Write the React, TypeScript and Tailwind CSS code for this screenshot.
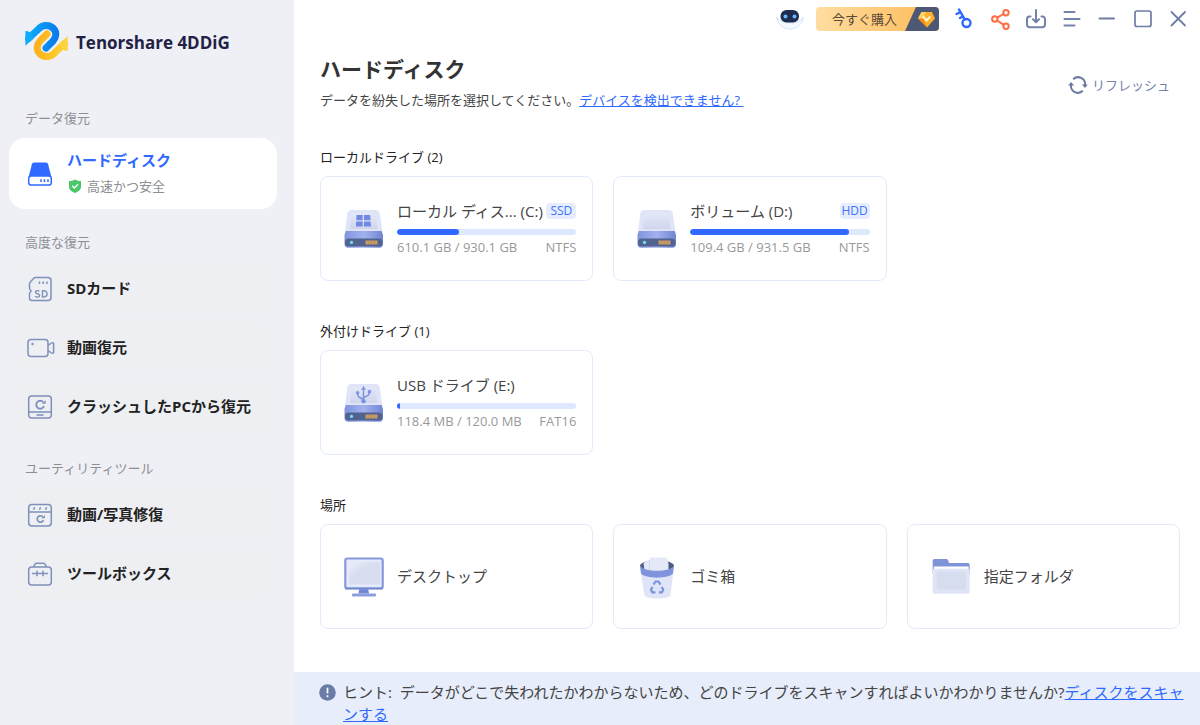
import React from "react";

type Drive = {
  name: string;
  letter: string;
  usage: string;
  format: string;
  percent: number;
  type?: string;
  mark?: "windows" | "usb";
};

const localDrives: Drive[] = [
  {
    name: "ローカル ディス...",
    letter: "(C:)",
    usage: "610.1 GB / 930.1 GB",
    format: "NTFS",
    percent: 34.4,
    type: "SSD",
    mark: "windows",
  },
  {
    name: "ボリューム",
    letter: "(D:)",
    usage: "109.4 GB / 931.5 GB",
    format: "NTFS",
    percent: 88.3,
    type: "HDD",
  },
];

const externalDrives: Drive[] = [
  {
    name: "USB ドライブ",
    letter: "(E:)",
    usage: "118.4 MB / 120.0 MB",
    format: "FAT16",
    percent: 1.5,
    mark: "usb",
  },
];

const Logo = () => (
  <svg width="43" height="40" viewBox="0 0 43 40" fill="none" aria-hidden="true">
    <defs>
      <linearGradient id="logoBlue" x1="0" y1="12" x2="34" y2="16" gradientUnits="userSpaceOnUse">
        <stop stopColor="#0cb0fb" />
        <stop offset="1" stopColor="#0b78ea" />
      </linearGradient>
      <linearGradient id="logoYellow" x1="9" y1="20" x2="43" y2="26" gradientUnits="userSpaceOnUse">
        <stop stopColor="#fdae1b" />
        <stop offset="1" stopColor="#fed535" />
      </linearGradient>
    </defs>
    <path d="M39.5 22.5 29 32.5C25 36.5 19 36.5 15 33C11 29 11.5 24 15 20L22 13" stroke="url(#logoYellow)" strokeWidth="7" strokeLinecap="round" />
    <path d="M42.6 15.2V29.8C41 30.4 39 29.2 37 28L34 23Z" fill="#fed23a" />
    <path d="M3.5 17.5 14 7.5C18 3.5 24 3.5 28 7C32 11 31.5 16 28 20L21 27" stroke="url(#logoBlue)" strokeWidth="7" strokeLinecap="round" />
    <path d="M.4 24.8V10.2C2 9.6 4 10.8 6 12L9 17Z" fill="#0cacfa" />
  </svg>
);

const DiskNavIcon = () => (
  <svg width="26" height="26" viewBox="0 0 26 26" fill="none" aria-hidden="true">
    <path d="M7.2 1.5H18.8C20 1.5 20.8 2.2 21.1 3.3L24.3 15.5H1.7L4.9 3.3C5.2 2.2 6 1.5 7.2 1.5Z" fill="#3069ff" />
    <rect x="1.7" y="15" width="22.6" height="9" rx="2.6" fill="#fff" stroke="#3069ff" strokeWidth="1.5" />
    <path d="M14 18.2V21M17.5 18.2V21M21 18.2V21" stroke="#3069ff" strokeWidth="1.5" />
  </svg>
);

const SdIcon = () => (
  <svg width="26" height="26" viewBox="0 0 26 26" fill="none" stroke="#7f91bb" strokeWidth="1.5" aria-hidden="true">
    <path d="M8.5 1.5H21A3 3 0 0 1 24 4.5V21.5A3 3 0 0 1 21 24.5H5A2.5 2.5 0 0 1 2.5 22V17.5C2.5 16.5 4 16 4 15C4 14 2.5 13.5 2.5 12.5V8C2.5 7.2 2.8 6.6 3.4 6L6.5 2.5C7 1.9 7.6 1.5 8.5 1.5Z" />
    <path d="M12.5 5.5V8M16.2 5.5V8M19.9 5.5V8" />
    <path d="M12.4 15.4C11 14.2 8.4 14.5 8.4 16.2C8.4 18.3 12.7 17.2 12.7 19.5C12.7 21.4 9.6 21.6 8 20.3M15.5 14.7V21H16.8C21.2 21 21.2 14.7 16.8 14.7Z" strokeWidth="1.4" />
  </svg>
);

const VideoIcon = () => (
  <svg width="28" height="20" viewBox="0 0 28 20" fill="none" stroke="#7f91bb" strokeWidth="1.5" aria-hidden="true">
    <rect x="1" y="1.5" width="20" height="17" rx="3" />
    <circle cx="5.5" cy="6" r="1.2" fill="#7f91bb" stroke="none" />
    <path d="M21 7.5 24.5 5C25.5 4.3 26.6 4.8 26.6 6V14C26.6 15.2 25.5 15.7 24.5 15L21 12.5" />
  </svg>
);

const CrashIcon = () => (
  <svg width="26" height="26" viewBox="0 0 26 26" fill="none" stroke="#7f91bb" strokeWidth="1.5" aria-hidden="true">
    <rect x="1.7" y="2" width="22.6" height="22" rx="3" />
    <path d="M1.7 18H24.3M9.5 21H16.5" />
    <path d="M16.2 8A4 4 0 1 0 17 12.2" strokeWidth="1.8" />
    <path d="M14.6 9.8H18.7V6.2Z" fill="#7f91bb" stroke="none" />
  </svg>
);

const RepairIcon = () => (
  <svg width="26" height="26" viewBox="0 0 26 26" fill="none" stroke="#7f91bb" strokeWidth="1.5" aria-hidden="true">
    <rect x="1.7" y="2.5" width="22.6" height="21.5" rx="3.2" />
    <path d="M1.7 10H24.3M6.6 7.8 7.6 5.3M12.5 7.8 13.5 5.3M18.6 7.8 19.6 5.3" />
    <path d="M15.6 14.6A3.2 3.2 0 1 0 16.4 18.2" strokeWidth="1.7" />
    <path d="M14.3 16.2H17.9V12.9Z" fill="#7f91bb" stroke="none" />
  </svg>
);

const ToolboxIcon = () => (
  <svg width="26" height="26" viewBox="0 0 26 26" fill="none" stroke="#7f91bb" strokeWidth="1.5" aria-hidden="true">
    <rect x="1.7" y="6" width="22.6" height="18" rx="3" />
    <path d="M6.5 6 7.8 3.3C8.2 2.5 8.7 2.2 9.5 2.2H16.5C17.3 2.2 17.8 2.5 18.2 3.3L19.5 6M5 12.5H21M10 9.8V15.2M16 9.8V15.2" />
  </svg>
);

const DriveIcon = ({ mark }: { mark?: "windows" | "usb" }) => (
  <svg width="40" height="40" viewBox="0 0 40 40" fill="none" aria-hidden="true">
    <defs>
      <linearGradient id="driveTop" x1="0" y1="0" x2="0" y2="1">
        <stop stopColor="#e4e8f8" />
        <stop offset="1" stopColor="#cfd6ec" />
      </linearGradient>
      <linearGradient id="driveSide" x1="0" y1="0" x2="1" y2="0">
        <stop stopColor="#7f94de" />
        <stop offset="0.5" stopColor="#a3b2ee" />
        <stop offset="1" stopColor="#7085d2" />
      </linearGradient>
    </defs>
    <path d="M7.5 1H31.5C34 1 35.3 2.2 35.7 4.5L38.5 24H.9L3.3 4.5C3.6 2.2 5 1 7.5 1Z" fill="#dfe4f8" />
    <path d="M9.5 4H29.5C31 4 31.8 4.8 32 6L33.5 20H5.8L7 6C7.2 4.8 8 4 9.5 4Z" fill="url(#driveTop)" />
    <path d="M1.8 22H37.6L39 26V35C39 37 37.5 38.8 35.5 38.8H3.8C1.8 38.8 .5 37 .5 35V26Z" fill="url(#driveSide)" />
    <rect x="1" y="29.5" width="37.5" height="8" rx="3.5" fill="#53638f" />
    <circle cx="7.5" cy="33.4" r="1.6" fill="#6fe3ea" />
    <path d="M21.5 31.5H33.5V35.5H21.5Z" fill="#c99d66" />
    <path d="M24.5 31.5V35.5M27.5 31.5V35.5M30.5 31.5V35.5" stroke="#a98059" strokeWidth=".6" />
    {mark === "windows" && (
      <path d="M12.5 6H18.7V11.2H12.3ZM20 6H26.2L26.5 11.2H20ZM12.2 12.4H18.7V17.5H11.9ZM20 12.4H26.6L27 17.5H20Z" fill="#7289e4" />
    )}
    {mark === "usb" && (
      <g stroke="#7d92e2" strokeWidth="1.5">
        <path d="M19.5 18V5.5M19.5 16.5C15 14.5 13.6 13.5 13.6 10.5M19.5 14.5C24 13 25.4 12 25.4 9" />
        <path d="M17.5 6.5 19.5 3.5 21.5 6.5Z" fill="#7d92e2" strokeWidth=".6" />
        <circle cx="13.6" cy="9.8" r="1.5" fill="#7d92e2" strokeWidth=".5" />
        <circle cx="19.5" cy="18.2" r="2" fill="#7d92e2" strokeWidth=".5" />
        <path d="M24 7.2H26.9V10H24Z" fill="#7d92e2" strokeWidth=".4" />
      </g>
    )}
  </svg>
);

const DesktopIcon = () => (
  <svg width="40" height="40" viewBox="0 0 40 40" fill="none" aria-hidden="true">
    <defs>
      <linearGradient id="screen" x1="0" y1="0" x2="1" y2="1">
        <stop stopColor="#eceffb" />
        <stop offset="0.4" stopColor="#d8deef" />
        <stop offset="1" stopColor="#d8deef" />
      </linearGradient>
    </defs>
    <path d="M15.5 31H24L25 36.5H14.5Z" fill="#7086d0" />
    <rect x="8" y="36.5" width="24" height="3" rx="1" fill="#8b9edf" />
    <rect x="1.3" y="1.5" width="37.4" height="30" rx="2" fill="#e6eafa" stroke="#8599dc" strokeWidth="2.2" />
    <rect x="5" y="5" width="31" height="22.5" rx="1" fill="url(#screen)" />
    <path d="M1 31.3H39" stroke="#7389d2" strokeWidth="1.8" />
  </svg>
);

const TrashIcon = () => (
  <svg width="40" height="44" viewBox="1 -1 38 44" fill="none" aria-hidden="true">
    <ellipse cx="20" cy="10" rx="17" ry="6" fill="#4e5d83" />
    <path d="M6.5 7 11.5 3.5 13 4.5V1.5H30L31.5 8V18H8Z" fill="#e4e9f8" />
    <path d="M12.5 4V16" stroke="#cfd7ec" />
    <path d="M3 10C6 18 34 18 37 10L33.5 39C32.8 43.8 8.2 43.8 7.3 39Z" fill="#dfe5f7" />
    <path d="M3 9.5C6 16.5 34 16.5 37 9.5L36 17.5C32 23 8 23 4 17.5Z" fill="#8094dd" />
    <g stroke="#7c92e3" strokeWidth="2.2">
      <path d="M16.5 28.5 18.5 25.5H21.5L23.5 28.7" />
      <path d="M24.7 31 26.2 33.8 24.8 36.3H21.8" />
      <path d="M18.5 36.3H15.3L14 33.8 15.5 31" />
    </g>
  </svg>
);

const FolderIcon = () => (
  <svg width="40" height="40" viewBox="2 1 36 36" fill="none" aria-hidden="true">
    <path d="M3.5 4.5C3.5 3.4 4.3 2.7 5.4 2.7H15.2C16.3 2.7 16.9 3.1 17.3 4L18.3 6.5H35C36.1 6.5 36.8 7.2 36.8 8.2V16H3.5Z" fill="#7f94d8" />
    <path d="M4.5 9.5H35.8V14H4.5Z" fill="#fff" />
    <rect x="3.5" y="11.5" width="33.3" height="22.5" rx="1.5" fill="#dfe5f7" />
    <rect x="7" y="14" width="26.5" height="16.500" rx="1" fill="#d6ddef" />
  </svg>
);

const RobotIcon = () => (
  <svg width="30" height="26" viewBox="0 0 30 26" fill="none" aria-hidden="true">
    <path d="M1.5 11C4 27 26 27 28.5 11C24 19 6 19 1.5 11Z" fill="#f5f9ff" stroke="#d2e3fb" />
    <rect x="5.5" y="4" width="18.5" height="12.5" rx="6" fill="#1f2c52" />
    <circle cx="10.5" cy="10.5" r="2" fill="#69b7fb" />
    <circle cx="19.5" cy="10.5" r="2" fill="#69b7fb" />
  </svg>
);

const GemIcon = () => (
  <svg className="absolute inset-y-0 right-0 h-full" width="34" height="24" viewBox="0 0 34 24" aria-hidden="true">
    <path d="M11 0H34V24H0Z" fill="#4d5874" />
    <path d="M16.5 5H27L30 11.5 22 20.5 13 11.5Z" fill="#fdb02b" />
    <path d="M16.5 5H21L18 11.5H13Z" fill="#ffd26a" />
    <path d="M13 11.5H18L22 20.5Z" fill="#f28b12" />
    <path d="M18 9.5 21.5 13.5 25.5 9.5" fill="none" stroke="#fff3d0" strokeWidth="2" />
  </svg>
);

const RefreshIcon = () => (
  <svg width="20" height="20" viewBox="0 0 20 20" fill="none" stroke="#6b7ba4" strokeWidth="2" aria-hidden="true">
    <path d="M5.2 4.2A7 7 0 0 1 17 10M14.8 15.8A7 7 0 0 1 3 10" />
    <path d="M13.8 9.5H19.8L17 13ZM.2 10.5H6.2L3 7Z" fill="#6b7ba4" stroke="none" />
  </svg>
);

const toolbarIcons = [
  {
    label: "キー",
    color: "#3069ff",
    art: (
      <>
        <circle cx="14.5" cy="15" r="4" strokeWidth="2.4" />
        <path d="M12.5 11.2 7 1.5M8.5 4.2 4.5 6M11 8.3 8 10" strokeWidth="2.4" />
      </>
    ),
  },
  {
    label: "共有",
    color: "#ff6d43",
    art: (
      <>
        <circle cx="6.8" cy="11" r="2.7" />
        <circle cx="18" cy="4.7" r="2.7" />
        <circle cx="18" cy="18.3" r="2.7" />
        <path d="M9.3 9.7 15.5 6M9.1 12.5 15.7 16.8" />
      </>
    ),
  },
  {
    label: "ダウンロード",
    color: "#7382aa",
    art: <path d="M6.5 8.5H5.5A2.5 2.5 0 0 0 3 11V16.5A2.7 2.7 0 0 0 5.7 19.2H18.3A2.7 2.7 0 0 0 21 16.5V11A2.5 2.5 0 0 0 18.5 8.5H17.5M12 2V14M9 11.2 12 14.2 15 11.2" />,
  },
  {
    label: "メニュー",
    color: "#7382aa",
    art: <path d="M4.5 4H14.5M4.5 11H19.5M4.5 17.5H14.5" />,
  },
  {
    label: "最小化",
    color: "#6e7da5",
    art: <path d="M3.5 10.5H18" />,
  },
  {
    label: "最大化",
    color: "#6e7da5",
    art: <rect x="3" y="3" width="16" height="15.5" rx="2" strokeWidth="1.7" />,
  },
  {
    label: "閉じる",
    color: "#6e7da5",
    art: <path d="M3.5 4 17 17.5M17 4 3.5 17.5" strokeWidth="1.8" />,
  },
];

function NavItem({ icon, label }: { icon: React.ReactNode; label: string }) {
  return (
    <button className="flex h-14 w-full items-center rounded-2xl bg-[#eeeff3] pl-[18px] text-left hover:bg-white">
      <span className="flex w-10 pt-0.5">{icon}</span>
      <span className="text-[15px] font-bold text-[#222]">{label}</span>
    </button>
  );
}

function NavLabel({ children }: { children: React.ReactNode }) {
  return <h2 className="pl-4 text-[13px] leading-5 text-[#8d8f94]">{children}</h2>;
}

function DriveCard({ drive }: { drive: Drive }) {
  return (
    <button className="flex h-[105px] items-center rounded-lg border border-[#e2eafc] bg-white pr-4 pl-[23px] text-left">
      <DriveIcon mark={drive.mark} />
      <div className="ml-[13px] min-w-0 flex-1">
        <div className="flex items-center justify-between">
          <span className="text-[15px] leading-6 whitespace-nowrap text-[#444]">
            {drive.name} {drive.letter}
          </span>
          {drive.type && (
            <span className="w-[30px] rounded-sm bg-[#e6edff] text-center text-[12px] leading-4 text-[#3c72ff]">
              {drive.type}
            </span>
          )}
        </div>
        <div
          role="progressbar"
          aria-label={drive.letter}
          aria-valuenow={drive.percent}
          className="mt-1.5 h-1.5 overflow-hidden rounded-sm bg-[#e0e8ff]"
        >
          <div className="h-full rounded-sm bg-[#3069ff]" style={{ width: `${drive.percent}%` }} />
        </div>
        <div className="mt-0.5 mb-px flex justify-between text-[13px] leading-5 text-[#999]">
          <span>{drive.usage}</span>
          <span>{drive.format}</span>
        </div>
      </div>
    </button>
  );
}

function PlaceCard({ icon, label }: { icon: React.ReactNode; label: string }) {
  return (
    <button className="flex h-[105px] items-center rounded-lg border border-[#e2eafc] bg-white pr-4 pl-[23px] text-left">
      {icon}
      <span className="ml-[13px] text-[15px] text-[#444]">{label}</span>
    </button>
  );
}

function Section({ title, children }: { title: string; children: React.ReactNode }) {
  return (
    <section>
      <h2 className="mb-[9px] text-[13px] leading-5 text-[#222]">{title}</h2>
      <div className="grid grid-cols-3 gap-5">{children}</div>
    </section>
  );
}

export default function App() {
  return (
    <div className="flex min-h-screen bg-white font-['Open_Sans','Noto_Sans_CJK_JP',sans-serif]">
      <aside className="w-[294px] shrink-0 bg-[#eef0f5] pr-[17px] pl-[9px]">
        <div className="flex items-center gap-2 pt-[21px] pl-4">
          <Logo />
          <span className="pt-1 text-[17px] font-bold whitespace-nowrap text-[#221f45]">Tenorshare 4DDiG</span>
        </div>

        <nav className="mt-[47px]">
          <NavLabel>データ復元</NavLabel>
          <button className="mt-[10px] flex h-[71px] w-full items-center rounded-2xl bg-white pl-[18px] text-left">
            <span className="flex w-10">
              <DiskNavIcon />
            </span>
            <span className="pb-1">
              <span className="block text-[15px] leading-6 font-bold text-[#3069ff]">ハードディスク</span>
              <span className="flex items-center gap-1 pt-1 text-[13px] leading-5 text-[#8d8f94]">
                <svg width="16" height="16" viewBox="0 0 16 16" aria-hidden="true">
                  <path d="M8 1.5C10 2.6 12 3 14 3V9C14 12 11 13.7 8 15C5 13.7 2 12 2 9V3C4 3 6 2.6 8 1.5Z" fill="#4bc767" />
                  <path d="M5.2 7.8 7.3 9.9 11 6.2" fill="none" stroke="#fff" strokeWidth="1.4" />
                </svg>
                高速かつ安全
              </span>
            </span>
          </button>

          <div className="mt-[23px]">
            <NavLabel>高度な復元</NavLabel>
          </div>
          <div className="mt-2 space-y-[3px]">
            <NavItem icon={<SdIcon />} label="SDカード" />
            <NavItem icon={<VideoIcon />} label="動画復元" />
            <NavItem icon={<CrashIcon />} label="クラッシュしたPCから復元" />
          </div>

          <div className="mt-6">
            <NavLabel>ユーティリティツール</NavLabel>
          </div>
          <div className="mt-2 space-y-[3px]">
            <NavItem icon={<RepairIcon />} label="動画/写真修復" />
            <NavItem icon={<ToolboxIcon />} label="ツールボックス" />
          </div>
        </nav>
      </aside>

      <main className="flex min-w-0 flex-1 flex-col">
        <div className="flex h-[38px] items-center justify-end pr-[3px]">
          <button aria-label="アシスタント">
            <RobotIcon />
          </button>
          <button className="relative mr-1.5 ml-[11px] h-6 w-[123px] overflow-hidden rounded-sm bg-linear-to-r from-[#ffdda0] to-[#fdba55] pl-4 text-left text-[13px] leading-6 text-[#5a4a35]">
            今すぐ購入
            <GemIcon />
          </button>
          {toolbarIcons.map((item) => (
            <button key={item.label} aria-label={item.label} className="flex h-8 w-9 items-center justify-center">
              <svg width="22" height="22" viewBox="0 0 22 22" fill="none" stroke={item.color} strokeWidth="2" strokeLinecap="round" strokeLinejoin="round">
                {item.art}
              </svg>
            </button>
          ))}
        </div>

        <div className="flex-1 pr-5 pb-10 pl-[26px]">
          <header className="flex items-center justify-between pt-[17px]">
            <div>
              <h1 className="text-[21px] leading-7 font-bold text-[#333]">ハードディスク</h1>
              <p className="mt-[7px] text-[13px] leading-5 text-[#444]">
                データを紛失した場所を選択してください。
                <a href="#detect" className="whitespace-pre text-[#3069ff] underline">
                  {"デバイスを検出できません? "}
                </a>
              </p>
            </div>
            <button className="flex items-center gap-1 pt-1 pr-2.5 text-[13px] leading-5 text-[#7382aa]">
              <RefreshIcon />
              リフレッシュ
            </button>
          </header>

          <div className="mt-[37px] space-y-10">
            <Section title={`ローカルドライブ (${localDrives.length})`}>
              {localDrives.map((drive) => (
                <DriveCard key={drive.letter} drive={drive} />
              ))}
            </Section>
            <Section title={`外付けドライブ (${externalDrives.length})`}>
              {externalDrives.map((drive) => (
                <DriveCard key={drive.letter} drive={drive} />
              ))}
            </Section>
            <Section title="場所">
              <PlaceCard icon={<DesktopIcon />} label="デスクトップ" />
              <PlaceCard icon={<TrashIcon />} label="ゴミ箱" />
              <PlaceCard icon={<FolderIcon />} label="指定フォルダ" />
            </Section>
          </div>
        </div>

        <footer className="flex gap-[7px] bg-[#e7edfa] pt-[9px] pr-2 pl-[25px]">
          <svg className="mt-[3px] shrink-0" width="17" height="17" viewBox="0 0 17 17" aria-hidden="true">
            <circle cx="8.5" cy="8.5" r="8.3" fill="#6b7ba8" />
            <path d="M8.5 3.8V9.5M8.5 11.3V13.2" stroke="#fff" strokeWidth="1.7" />
          </svg>
          <p className="text-[15px] leading-[22px] text-[#444]">
            ヒント:&nbsp; データがどこで失われたかわからないため、どのドライブをスキャンすればよいかわかりませんか?
            <a href="#scan" className="text-[#3069ff] underline">
              ディスクをスキャンする
            </a>
          </p>
        </footer>
      </main>
    </div>
  );
}
